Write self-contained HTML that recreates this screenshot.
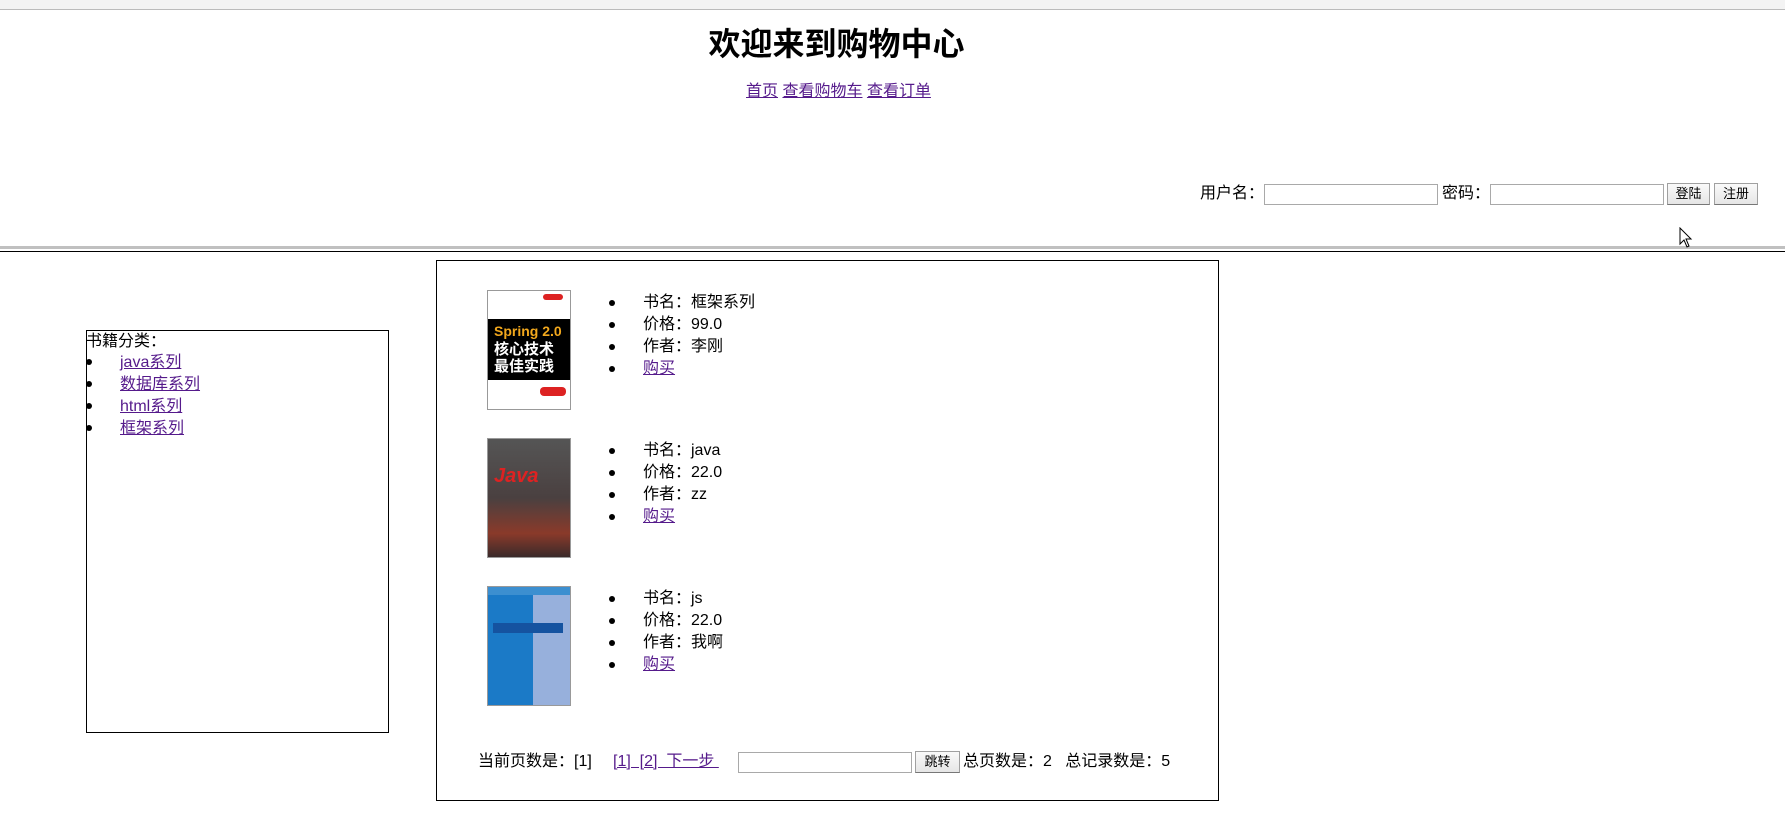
<!DOCTYPE html>
<html><head><meta charset="utf-8"><style>
body{margin:0;width:1785px;height:829px;position:relative;overflow:hidden;background:#fff;font-family:"Liberation Sans","Noto Sans CJK SC",sans-serif;font-size:16px;color:#000}
.a{position:absolute;white-space:nowrap}
a{color:#551a8b;text-decoration:underline}
.inp{position:absolute;border:1px solid #a9a9a9;height:19px;background:#fff}
.btn{position:absolute;border:1px solid #a0a0a0;border-bottom-color:#777;background:linear-gradient(#fafafa,#e6e6e6);font-size:13px;text-align:center;line-height:20px;height:20px}
.dot{position:absolute;width:6px;height:6px;border-radius:50%;background:#000}
</style></head><body>
<div class="a" style="left:0;top:0;width:1785px;height:9px;background:#f3f3f3;border-bottom:1px solid #bbb"></div>
<div class="a" style="width:1785px;text-align:center;top:23px;font-size:32px;font-weight:bold;line-height:42px;left:-56px">欢迎来到购物中心</div>
<div class="a" style="left:746px;top:82px;line-height:20px"><a>首页</a> <a>查看购物车</a> <a>查看订单</a></div>
<div class="a" style="left:1200px;top:183px;line-height:22px">用户名：</div>
<div class="inp" style="left:1264px;top:184px;width:172px"></div>
<div class="a" style="left:1442px;top:183px;line-height:22px">密码：</div>
<div class="inp" style="left:1490px;top:184px;width:172px"></div>
<div class="btn" style="left:1667px;top:183px;width:41px">登陆</div>
<div class="btn" style="left:1714px;top:183px;width:42px">注册</div>
<div class="a" style="left:0;top:246px;width:1785px;height:3px;background:#c0c0c0"></div>
<div class="a" style="left:0;top:251px;width:1785px;height:1px;background:#000"></div>
<svg class="a" style="left:1679px;top:227px" width="14" height="22"><path d="M1 1 L1 17 L5 13 L8 20 L10 19 L7 12 L12 12 Z" fill="#fff" stroke="#000"/></svg>

<div class="a" style="left:86px;top:330px;width:301px;height:401px;border:1px solid #000"></div>
<div class="a" style="left:86px;top:331px;line-height:22px">书籍分类：</div>
<div class="dot" style="left:86px;top:359px"></div><div class="a" style="left:120px;top:352px;line-height:22px"><a>java系列</a></div>
<div class="dot" style="left:86px;top:381px"></div><div class="a" style="left:120px;top:374px;line-height:22px"><a>数据库系列</a></div>
<div class="dot" style="left:86px;top:403px"></div><div class="a" style="left:120px;top:396px;line-height:22px"><a>html系列</a></div>
<div class="dot" style="left:86px;top:425px"></div><div class="a" style="left:120px;top:418px;line-height:22px"><a>框架系列</a></div>

<div class="a" style="left:436px;top:260px;width:781px;height:539px;border:1px solid #000"></div>

<div class="a" style="left:487px;top:290px;width:82px;height:118px;border:1px solid #999;background:#fff">
 <div style="position:absolute;left:0;top:28px;width:82px;height:61px;background:#000"></div>
 <div style="position:absolute;left:6px;top:32px;color:#f2a81d;font-weight:bold;font-size:14px">Spring 2.0</div>
 <div style="position:absolute;left:6px;top:50px;color:#fff;font-weight:bold;font-size:15px;line-height:17px">核心技术<br>最佳实践</div>
 <div style="position:absolute;left:52px;top:96px;width:26px;height:9px;background:#d22;border-radius:4px"></div>
 <div style="position:absolute;left:55px;top:3px;width:20px;height:6px;background:#d22;border-radius:3px"></div>
</div>
<div class="a" style="left:487px;top:438px;width:82px;height:118px;border:1px solid #999;background:linear-gradient(#555 0%,#4a4040 50%,#8a3a2a 80%,#3a2a2a 100%)">
 <div style="position:absolute;left:6px;top:26px;color:#d22;font-weight:bold;font-style:italic;font-size:20px">Java</div>
</div>
<div class="a" style="left:487px;top:586px;width:82px;height:118px;border:1px solid #999;background:linear-gradient(90deg,#1b7ac7 0%,#1b7ac7 55%,#97b0dc 55%)">
 <div style="position:absolute;left:5px;top:36px;width:70px;height:10px;background:#1553a0"></div>
 <div style="position:absolute;left:0;top:0;width:82px;height:8px;background:#3c8fd0"></div>
</div>

<div class="dot" style="left:609px;top:300px"></div><div class="a" style="left:643px;top:292px;line-height:22px">书名：框架系列</div>
<div class="dot" style="left:609px;top:322px"></div><div class="a" style="left:643px;top:314px;line-height:22px">价格：99.0</div>
<div class="dot" style="left:609px;top:344px"></div><div class="a" style="left:643px;top:336px;line-height:22px">作者：李刚</div>
<div class="dot" style="left:609px;top:366px"></div><div class="a" style="left:643px;top:358px;line-height:22px"><a>购买</a></div>

<div class="dot" style="left:609px;top:448px"></div><div class="a" style="left:643px;top:440px;line-height:22px">书名：java</div>
<div class="dot" style="left:609px;top:470px"></div><div class="a" style="left:643px;top:462px;line-height:22px">价格：22.0</div>
<div class="dot" style="left:609px;top:492px"></div><div class="a" style="left:643px;top:484px;line-height:22px">作者：zz</div>
<div class="dot" style="left:609px;top:514px"></div><div class="a" style="left:643px;top:506px;line-height:22px"><a>购买</a></div>

<div class="dot" style="left:609px;top:596px"></div><div class="a" style="left:643px;top:588px;line-height:22px">书名：js</div>
<div class="dot" style="left:609px;top:618px"></div><div class="a" style="left:643px;top:610px;line-height:22px">价格：22.0</div>
<div class="dot" style="left:609px;top:640px"></div><div class="a" style="left:643px;top:632px;line-height:22px">作者：我啊</div>
<div class="dot" style="left:609px;top:662px"></div><div class="a" style="left:643px;top:654px;line-height:22px"><a>购买</a></div>

<div class="a" style="left:478px;top:751px;line-height:22px">当前页数是：[1]</div>
<div class="a" style="left:613px;top:751px;line-height:22px"><a>[1]&nbsp;&nbsp;[2]&nbsp;&nbsp;下一步&nbsp;</a></div>
<div class="inp" style="left:738px;top:752px;width:172px"></div>
<div class="btn" style="left:915px;top:751px;width:43px">跳转</div>
<div class="a" style="left:963px;top:751px;line-height:22px">总页数是：2&nbsp;&nbsp;&nbsp;总记录数是：5</div>
</body></html>
